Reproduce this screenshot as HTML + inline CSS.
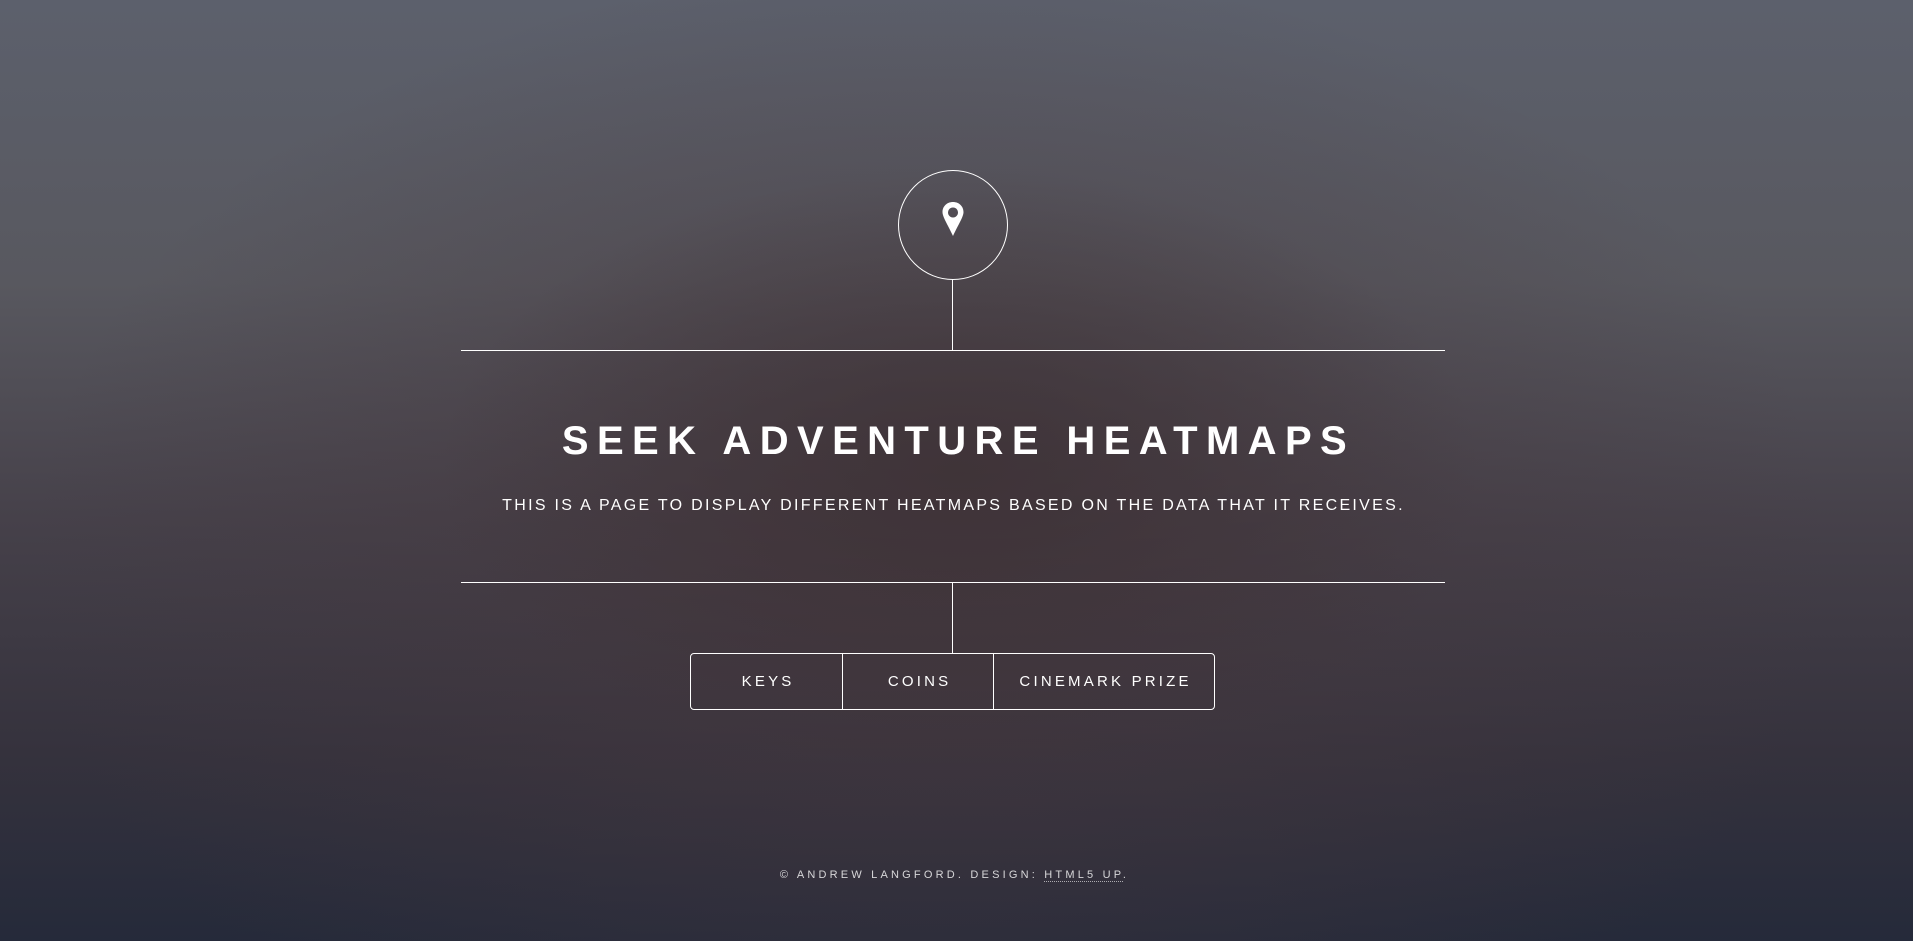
<!DOCTYPE html>
<html><head><meta charset="utf-8"><style>
html,body{margin:0;padding:0;width:1913px;height:941px;overflow:hidden}
body{position:relative;font-family:"Liberation Sans",sans-serif;color:#fff;
background:
radial-gradient(ellipse 520px 300px at 960px 470px, rgba(60,48,52,0.75), rgba(60,48,52,0) 100%),
radial-gradient(ellipse 900px 600px at 930px 560px, rgba(70,56,62,0.7), rgba(70,56,62,0) 100%),
linear-gradient(180deg,#5c606c 0%,#58585f 30%,#46414a 55%,#35323d 80%,#252a3a 100%);}
.abs{position:absolute}
.circle{left:898px;top:170px;width:108px;height:108px;border:1px solid #fff;border-radius:50%}
.hline{left:461px;width:984px;height:1px;background:#fff}
.vline{left:952px;width:1px;background:#fff}
h1{position:absolute;left:0;width:1913px;top:417px;margin:0;text-align:center;font-size:40px;font-weight:bold;letter-spacing:8.4px;line-height:48px;text-indent:4px}
.sub{position:absolute;left:0;width:1913px;top:494px;text-align:center;font-size:16px;letter-spacing:2.3px;line-height:24px;text-indent:-6px}
.nav{left:690px;top:653px;width:523px;height:55px;border:1px solid #fff;border-radius:4px;display:flex}
.nav div{height:55px;display:flex;align-items:center;justify-content:center;font-size:15px;letter-spacing:3.2px;text-indent:3.2px}
.foot{left:0;width:1913px;top:867px;text-align:center;font-size:11px;letter-spacing:3.2px;color:rgba(255,255,255,0.8);line-height:16px;text-indent:-4px}
.foot span{border-bottom:1px dotted rgba(255,255,255,0.6)}
</style></head><body>
<div class="abs circle"></div>
<svg class="abs" style="left:941px;top:201px" width="24" height="36" viewBox="0 0 24 36">
<path fill="#fff" fill-rule="evenodd" d="M12 1C6 1 1.5 5.3 1.5 11c0 5 5 12 10.5 24C17.5 23 22.5 16 22.5 11 22.5 5.3 18 1 12 1zM12 6.5a5 5 0 1 0 0.01 0z"/>
</svg>
<div class="abs vline" style="top:279px;height:71px"></div>
<div class="abs hline" style="top:350px"></div>
<h1>SEEK ADVENTURE HEATMAPS</h1>
<div class="sub">THIS IS A PAGE TO DISPLAY DIFFERENT HEATMAPS BASED ON THE DATA THAT IT RECEIVES.</div>
<div class="abs hline" style="top:582px"></div>
<div class="abs vline" style="top:582px;height:71px"></div>
<div class="abs nav">
<div style="width:151px;border-right:1px solid #fff">KEYS</div>
<div style="width:150px;border-right:1px solid #fff">COINS</div>
<div style="flex:1">CINEMARK PRIZE</div>
</div>
<div class="abs foot">© ANDREW LANGFORD. DESIGN: <span>HTML5 UP</span>.</div>
</body></html>
